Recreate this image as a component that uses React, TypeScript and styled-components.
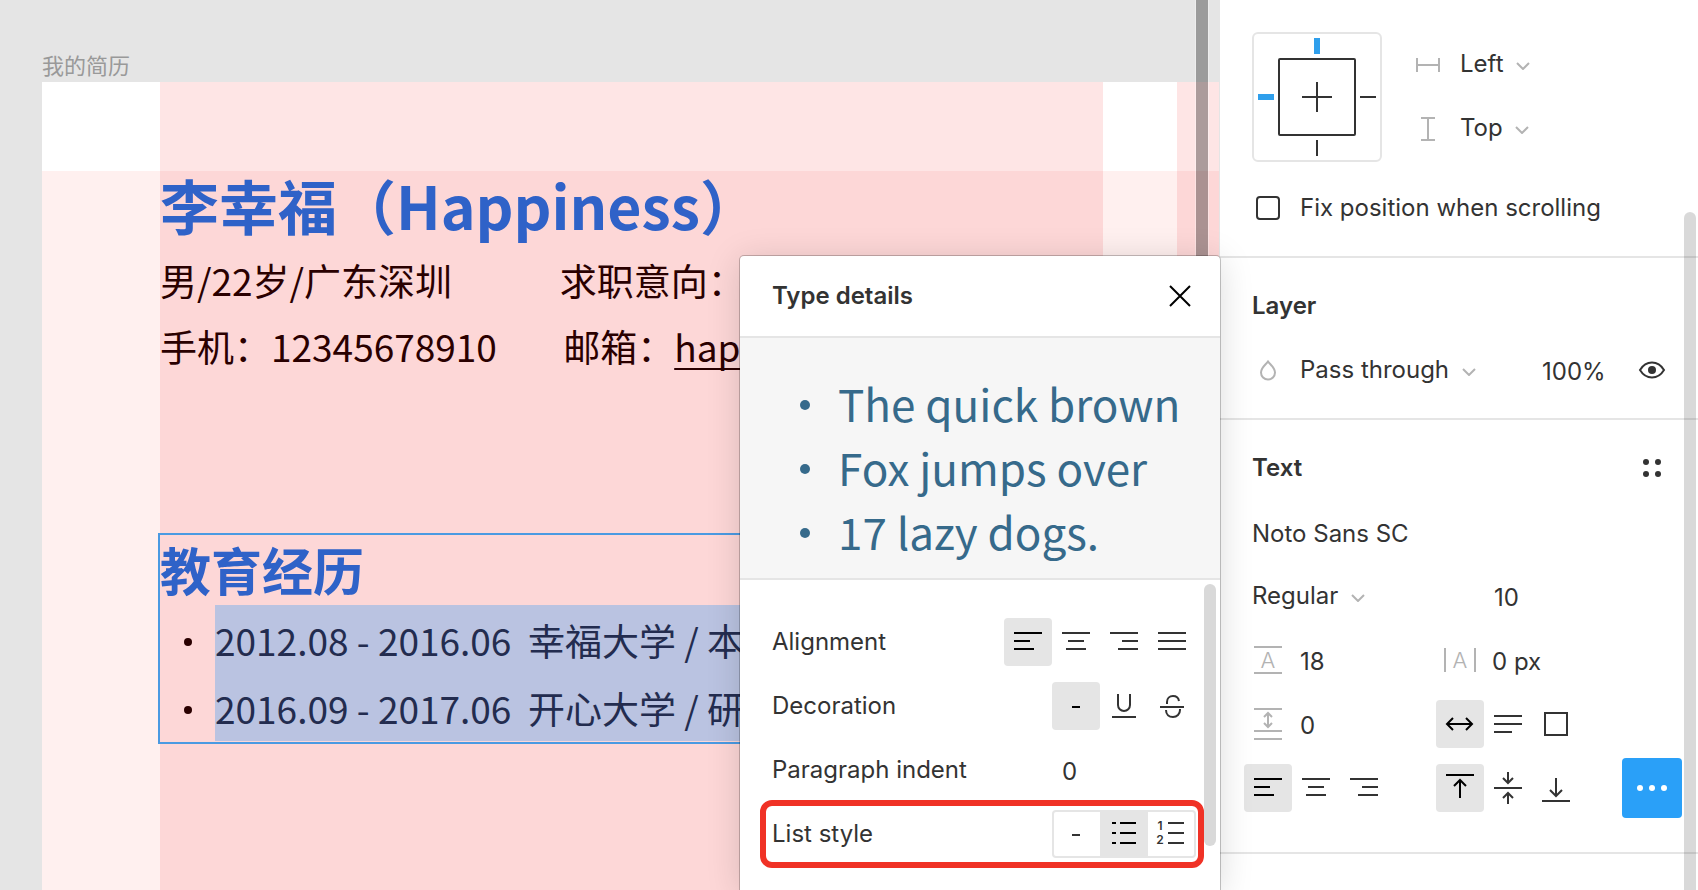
import React from "react";
import styled, { createGlobalStyle, css } from "styled-components";

const UI_FONT = `Inter, "Liberation Sans", sans-serif`;
const DOC_FONT = `"Noto Sans CJK SC", "Noto Sans", sans-serif`;

const GlobalStyle = createGlobalStyle`
  *, *::before, *::after { box-sizing: border-box; }
  body {
    margin: 0;
    background: #fff;
    color: #333;
    font-family: ${UI_FONT};
    font-size: 24px;
    line-height: 32px;
  }
  button, input, select {
    margin: 0;
    padding: 0;
    border: 0;
    background: none;
    color: inherit;
    font: inherit;
    outline: none;
  }
  svg { display: block; flex: none; }
`;

const Editor = styled.div`
  display: flex;
  height: 100vh;
  min-height: 860px;
  overflow: hidden;
`;

/* ---------- canvas ---------- */

const Canvas = styled.main`
  position: relative;
  z-index: 1;
  flex: 1;
  min-width: 0;
  display: flex;
  flex-direction: column;
  padding: 50px 0 0 42px;
  background: #e5e5e5;
  border-right: 1px solid #e5e5e5;
`;

const FrameLabel = styled.div`
  height: 32px;
  font-family: ${DOC_FONT};
  font-size: 22px;
  line-height: 28px;
  color: #999;
`;

const Artboard = styled.div`
  flex: 1;
  min-height: 0;
  display: grid;
  grid-template-columns: 118px minmax(0, 1fr) 74px 42px;
`;

const Strip = styled.div<{ $column?: boolean }>`
  min-width: 0;
  background: ${(p) =>
    p.$column
      ? "linear-gradient(#fee5e5 89px, #fdd7d7 89px)"
      : "linear-gradient(#fff 89px, #fff0ef 89px)"};
`;

const Resume = styled.article`
  padding-top: 81px;
  font-family: ${DOC_FONT};
  font-size: 37px;
  line-height: 66px;
  color: #2a0000;
  white-space: pre;
`;

const Name = styled.h1`
  margin: 0;
  font-size: 59px;
  line-height: 84px;
  font-weight: 700;
  color: #2f62c8;
`;

const InfoLine = styled.p`
  margin: 0;
`;

const MailLink = styled.a`
  color: inherit;
  text-decoration: underline;
  text-decoration-thickness: 2px;
  text-underline-offset: 6px;
  text-decoration-skip-ink: none;
`;

const SelectedBlock = styled.section`
  margin: 154px 0 0 -2px;
  padding-bottom: 1px;
  border: 2px solid #4a9ae2;
`;

const SectionTitle = styled.h2`
  margin: 0 0 2px;
  font-size: 51px;
  line-height: 68px;
  font-weight: 700;
  color: #2f62c8;
`;

const EntryList = styled.ul`
  margin: 0;
  padding: 0;
  list-style: none;
`;

const Entry = styled.li`
  display: grid;
  grid-template-columns: 55px minmax(0, 1fr);
  align-items: center;

  &::before {
    content: "";
    justify-self: center;
    width: 8px;
    height: 8px;
    margin-top: 6px;
    border-radius: 50%;
    background: #2a0000;
  }
`;

const Selection = styled.span`
  padding-top: 2px;
  background: #bac3e1;
  color: #232c4f;
`;

const CanvasScrollbar = styled.div`
  position: absolute;
  top: 0;
  bottom: 0;
  right: 10px;
  width: 14px;
  background: rgba(0, 0, 0, 0.32);
  border: solid rgba(255, 255, 255, 0.3);
  border-width: 0 1px;
  background-clip: padding-box;
`;

/* ---------- shared controls ---------- */

const IconButton = styled.button<{ $active?: boolean }>`
  width: 48px;
  height: 48px;
  border-radius: 4px;
  cursor: pointer;
  ${(p) =>
    p.$active &&
    css`
      background: #e5e5e5;
      color: #000;
    `}
`;

const ButtonGroup = styled.div<{ $outlined?: boolean }>`
  display: flex;
  border-radius: 4px;
  ${(p) =>
    p.$outlined &&
    css`
      box-shadow: inset 0 0 0 2px #e5e5e5;
      ${IconButton} {
        border-radius: 0;
      }
    `}
`;

const Field = styled.input<{ $width: number }>`
  width: ${(p) => p.$width}px;
  height: 48px;
  padding-top: 2px;
`;

const SelectWrap = styled.div`
  display: flex;
  align-items: center;
  gap: 12px;
`;

const Picker = styled.select`
  appearance: none;
  height: 32px;
  padding-bottom: 2px;
`;

const ChevronIcon = styled.svg`
  margin-top: 4px;
  fill: none;
  stroke: #b3b3b3;
  stroke-width: 2px;
`;

const Glyph = styled.svg<{ $muted?: boolean }>`
  width: 48px;
  height: 48px;
  fill: none;
  stroke: ${(p) => (p.$muted ? "#b3b3b3" : "currentColor")};
  stroke-width: 2px;

  text {
    fill: ${(p) => (p.$muted ? "#b3b3b3" : "currentColor")};
    stroke: none;
    text-anchor: middle;
  }
`;

function Icon({ d, muted, children }: { d?: string; muted?: boolean; children?: React.ReactNode }) {
  return (
    <Glyph viewBox="0 0 48 48" $muted={muted} aria-hidden="true">
      {d && <path d={d} />}
      {children}
    </Glyph>
  );
}

function Dropdown({ label, value }: { label: string; value: string }) {
  return (
    <SelectWrap>
      <Picker aria-label={label} defaultValue={value}>
        <option>{value}</option>
      </Picker>
      <ChevronIcon width="14" height="8" viewBox="0 0 14 8" aria-hidden="true">
        <path d="M1 1l6 6 6-6" />
      </ChevronIcon>
    </SelectWrap>
  );
}

const ICONS = {
  alignLeft: "M10 15H38M10 23H26M10 31H30",
  alignCenter: "M10 15H38M16 23H32M14 31H34",
  alignRight: "M10 15H38M22 23H38M18 31H38",
  alignJustify: "M10 15H38M10 23H38M10 31H38",
  none: "M20 25H28",
  underline: "M18 12V23a6 6 0 0 0 12 0V12M12 35H36",
  strike: "M12 25H36M19 22V20c0-3.500 2.500-6 6-6s5.500 2 6 5M18 28c0 4.500 3 7 7 7s7-3 7-7V27",
  bullets: "M12 13H16M12 23H16M12 33H16M20 13H36M20 23H36M20 33H36",
  numberedLines: "M20 13H36M20 23H36M20 33H36",
  autoWidth: "M11 24H36M17 18L11 24L17 30M30 18L36 24L30 30",
  autoHeight: "M10 16H38M10 24H38M10 32H28",
  fixedSize: "M13 13H35V35H13Z",
  alignTop: "M10 11H38M24 34V16M18 22L24 16L30 22",
  alignMiddle: "M10 24H38M24 8V18M19 14L24 19L29 14M24 40V30M19 34L24 29L29 34",
  alignBottom: "M10 37H38M24 14V32M18 26L24 32L30 26",
  horizontal: "M13 18V32M35 18V32M13 25H35",
  vertical: "M17 14H31M17 36H31M24 14V36",
  lineHeight: "M10 11H38M10 37H38",
  letterSpacing: "M9 12V36M39 12V36",
  paragraphSpacing: "M10 9H38M10 31H38M10 39H38M24 13V27M20 17L24 13L28 17M20 23L24 27L28 23",
  drop: "M24 15.500C22 18.500 17 21.500 17 26.500a7 7 0 0 0 14 0C31 21.500 26 18.500 24 15.500Z",
};

/* ---------- type details dialog ---------- */

const Dialog = styled.section`
  position: absolute;
  top: 256px;
  right: -1px;
  bottom: 0;
  width: 480px;
  background: #fff;
  border-radius: 4px 4px 0 0;
  box-shadow: 0 0 0 1px rgba(0, 0, 0, 0.22), 0 4px 34px rgba(0, 0, 0, 0.15);
`;

const DialogHeader = styled.header`
  display: flex;
  align-items: center;
  justify-content: space-between;
  height: 82px;
  padding: 0 16px 0 32px;
  border-bottom: 2px solid #e5e5e5;
  color: #333;
`;

const Heading = styled.h3`
  margin: 0;
  font-size: 24px;
  font-weight: 600;
`;

const Preview = styled.ul`
  margin: 0;
  padding: 33px 0 15px 48px;
  list-style: none;
  background: #f6f6f6;
  border-bottom: 2px solid #e5e5e5;
  font-family: ${DOC_FONT};
  font-size: 44px;
  line-height: 64px;
  color: #366a8b;
  white-space: nowrap;
`;

const PreviewLine = styled.li`
  display: grid;
  grid-template-columns: 34px 1fr;
  column-gap: 16px;
  align-items: center;

  &::before {
    content: "";
    justify-self: center;
    width: 10px;
    height: 10px;
    margin-top: 4px;
    border-radius: 50%;
    background: currentColor;
  }
`;

const DialogBody = styled.div`
  padding: 30px 24px 0 32px;
`;

const OptionRow = styled.div`
  position: relative;
  display: flex;
  align-items: center;
  justify-content: space-between;
  height: 64px;
`;

const Highlight = styled.div`
  position: absolute;
  inset: -2px -8px -2px -12px;
  border: 6px solid #f03226;
  border-radius: 12px;
  pointer-events: none;
`;

const DialogScrollbar = styled.div`
  position: absolute;
  top: 328px;
  right: 4px;
  width: 12px;
  height: 262px;
  border-radius: 6px;
  background: #d9d9d9;
`;

function TypeDetails() {
  return (
    <Dialog role="dialog" aria-labelledby="type-details">
      <DialogHeader>
        <Heading id="type-details">Type details</Heading>
        <IconButton aria-label="Close">
          <Icon>
            <path d="M14 14L34 34M34 14L14 34" stroke="#000" />
          </Icon>
        </IconButton>
      </DialogHeader>
      <Preview>
        <PreviewLine>The quick brown</PreviewLine>
        <PreviewLine>Fox jumps over</PreviewLine>
        <PreviewLine>17 lazy dogs.</PreviewLine>
      </Preview>
      <DialogBody>
        <OptionRow>
          <span>Alignment</span>
          <ButtonGroup>
            <IconButton $active aria-label="Left"><Icon d={ICONS.alignLeft} /></IconButton>
            <IconButton aria-label="Center"><Icon d={ICONS.alignCenter} /></IconButton>
            <IconButton aria-label="Right"><Icon d={ICONS.alignRight} /></IconButton>
            <IconButton aria-label="Justified"><Icon d={ICONS.alignJustify} /></IconButton>
          </ButtonGroup>
        </OptionRow>
        <OptionRow>
          <span>Decoration</span>
          <ButtonGroup>
            <IconButton $active aria-label="None"><Icon d={ICONS.none} /></IconButton>
            <IconButton aria-label="Underline"><Icon d={ICONS.underline} /></IconButton>
            <IconButton aria-label="Strikethrough"><Icon d={ICONS.strike} /></IconButton>
          </ButtonGroup>
        </OptionRow>
        <OptionRow>
          <label htmlFor="indent">Paragraph indent</label>
          <Field id="indent" $width={134} defaultValue="0" />
        </OptionRow>
        <OptionRow>
          <span>List style</span>
          <ButtonGroup $outlined>
            <IconButton aria-label="No list"><Icon d={ICONS.none} /></IconButton>
            <IconButton $active aria-label="Bulleted list"><Icon d={ICONS.bullets} /></IconButton>
            <IconButton aria-label="Numbered list">
              <Icon d={ICONS.numberedLines}>
                <text x="12" y="20" fontSize="12" fontWeight="600">1</text>
                <text x="12" y="34" fontSize="12" fontWeight="600">2</text>
              </Icon>
            </IconButton>
          </ButtonGroup>
          <Highlight />
        </OptionRow>
      </DialogBody>
      <DialogScrollbar />
    </Dialog>
  );
}

/* ---------- properties sidebar ---------- */

const Sidebar = styled.aside`
  position: relative;
  flex: none;
  width: 478px;
  background: #fff;
`;

const Panel = styled.section<{ $top?: number; $bottom?: number }>`
  padding: ${(p) => p.$top ?? 16}px 16px ${(p) => p.$bottom ?? 16}px 24px;
  border-bottom: 2px solid #e5e5e5;
`;

const Row = styled.div`
  display: flex;
  align-items: center;
  height: 64px;
`;

const Inset = styled.div`
  flex: 1;
  padding-left: 8px;
`;

const Half = styled.div`
  display: flex;
  align-items: center;
  gap: 8px;
  width: 192px;
`;

const Grow = styled.div<{ $indent?: number }>`
  display: flex;
  align-items: center;
  gap: 8px;
  flex: 1;
  padding-left: ${(p) => p.$indent ?? 0}px;
`;

const Trailing = styled.button`
  display: flex;
  align-items: center;
  justify-content: center;
  width: 60px;
  height: 48px;
  cursor: pointer;
`;

const MoreButton = styled(Trailing)`
  height: 60px;
  border-radius: 4px;
  background: #2aa0f8;
  color: #fff;
`;

const Constraints = styled.div`
  display: flex;
  gap: 22px;
  margin-bottom: 14px;
  padding-left: 8px;
`;

const ConstraintBox = styled.div`
  width: 130px;
  height: 130px;
  border: 2px solid #e5e5e5;
  border-radius: 6px;
`;

const CheckLabel = styled.label`
  display: flex;
  align-items: center;
  gap: 20px;
  padding-left: 12px;
`;

const Checkbox = styled.input`
  appearance: none;
  width: 24px;
  height: 24px;
  border: 2px solid #333;
  border-radius: 4px;
`;

const SidebarScrollbar = styled.div`
  position: absolute;
  top: 212px;
  right: 2px;
  bottom: 0;
  width: 12px;
  border-radius: 6px 6px 0 0;
  background: rgba(0, 0, 0, 0.15);
`;

function Properties() {
  return (
    <Sidebar>
      <Panel $top={32}>
        <Constraints>
          <ConstraintBox>
            <svg width="126" height="126" viewBox="0 0 126 126" fill="none" stroke="#333" strokeWidth="2" aria-hidden="true">
              <rect x="25" y="25" width="76" height="76" rx="1" />
              <path d="M48 63H78M63 48V78M106 63H122M63 106V122" />
              <path d="M63 4V20M4 63H20" stroke="#2f9fec" strokeWidth="6" />
            </svg>
          </ConstraintBox>
          <div>
            <Row>
              <Half>
                <Icon muted d={ICONS.horizontal} />
                <Dropdown label="Horizontal constraint" value="Left" />
              </Half>
            </Row>
            <Row>
              <Half>
                <Icon muted d={ICONS.vertical} />
                <Dropdown label="Vertical constraint" value="Top" />
              </Half>
            </Row>
          </div>
        </Constraints>
        <Row>
          <CheckLabel>
            <Checkbox type="checkbox" />
            <span>Fix position when scrolling</span>
          </CheckLabel>
        </Row>
      </Panel>

      <Panel>
        <Row>
          <Inset><Heading>Layer</Heading></Inset>
        </Row>
        <Row>
          <Grow>
            <Icon muted d={ICONS.drop} />
            <Dropdown label="Blend mode" value="Pass through" />
          </Grow>
          <Field aria-label="Opacity" $width={80} defaultValue="100%" />
          <Trailing aria-label="Toggle visibility">
            <Icon>
              <path d="M12 24C18 14 30 14 36 24C30 34 18 34 12 24Z" />
              <circle cx="24" cy="24" r="4" fill="currentColor" stroke="none" />
            </Icon>
          </Trailing>
        </Row>
      </Panel>

      <Panel $bottom={32}>
        <Row>
          <Inset><Heading>Text</Heading></Inset>
          <Trailing aria-label="Text styles">
            <Icon>
              <g fill="currentColor" stroke="none">
                <circle cx="18" cy="18" r="3" />
                <circle cx="30" cy="18" r="3" />
                <circle cx="18" cy="30" r="3" />
                <circle cx="30" cy="30" r="3" />
              </g>
            </Icon>
          </Trailing>
        </Row>
        <Row>
          <Inset><Field aria-label="Font family" $width={300} defaultValue="Noto Sans SC" /></Inset>
        </Row>
        <Row>
          <Half>
            <Inset><Dropdown label="Font style" value="Regular" /></Inset>
          </Half>
          <Grow $indent={58}>
            <Field aria-label="Font size" $width={100} defaultValue="10" />
          </Grow>
        </Row>
        <Row>
          <Half>
            <Icon muted d={ICONS.lineHeight}>
              <text x="24" y="32" fontSize="22" fontWeight="300">A</text>
            </Icon>
            <Field aria-label="Line height" $width={100} defaultValue="18" />
          </Half>
          <Grow>
            <Icon muted d={ICONS.letterSpacing}>
              <text x="24" y="32" fontSize="22" fontWeight="300">A</text>
            </Icon>
            <Field aria-label="Letter spacing" $width={100} defaultValue="0 px" />
          </Grow>
        </Row>
        <Row>
          <Half>
            <Icon muted d={ICONS.paragraphSpacing} />
            <Field aria-label="Paragraph spacing" $width={100} defaultValue="0" />
          </Half>
          <ButtonGroup>
            <IconButton $active aria-label="Auto width"><Icon d={ICONS.autoWidth} /></IconButton>
            <IconButton aria-label="Auto height"><Icon d={ICONS.autoHeight} /></IconButton>
            <IconButton aria-label="Fixed size"><Icon d={ICONS.fixedSize} /></IconButton>
          </ButtonGroup>
        </Row>
        <Row>
          <Half>
            <ButtonGroup>
              <IconButton $active aria-label="Align left"><Icon d={ICONS.alignLeft} /></IconButton>
              <IconButton aria-label="Align center"><Icon d={ICONS.alignCenter} /></IconButton>
              <IconButton aria-label="Align right"><Icon d={ICONS.alignRight} /></IconButton>
            </ButtonGroup>
          </Half>
          <Grow>
            <ButtonGroup>
              <IconButton $active aria-label="Align top"><Icon d={ICONS.alignTop} /></IconButton>
              <IconButton aria-label="Align middle"><Icon d={ICONS.alignMiddle} /></IconButton>
              <IconButton aria-label="Align bottom"><Icon d={ICONS.alignBottom} /></IconButton>
            </ButtonGroup>
          </Grow>
          <MoreButton aria-label="Type details">
            <Icon>
              <g fill="currentColor" stroke="none">
                <circle cx="12" cy="24" r="3" />
                <circle cx="24" cy="24" r="3" />
                <circle cx="36" cy="24" r="3" />
              </g>
            </Icon>
          </MoreButton>
        </Row>
      </Panel>
      <SidebarScrollbar />
    </Sidebar>
  );
}

export default function App() {
  return (
    <>
      <GlobalStyle />
      <Editor>
        <Canvas>
          <FrameLabel>我的简历</FrameLabel>
          <Artboard>
            <Strip />
            <Strip $column>
              <Resume lang="zh-CN">
                <Name>李幸福（Happiness）</Name>
                <InfoLine>{"男/22岁/广东深圳" + " ".repeat(13) + "求职意向："}</InfoLine>
                <InfoLine>
                  {"手机：12345678910" + " ".repeat(8) + "邮箱："}
                  <MailLink href="#mail">happ</MailLink>
                </InfoLine>
                <SelectedBlock>
                  <SectionTitle>教育经历</SectionTitle>
                  <EntryList>
                    <Entry><Selection>{"2012.08 - 2016.06  幸福大学 / 本"}</Selection></Entry>
                    <Entry><Selection>{"2016.09 - 2017.06  开心大学 / 研"}</Selection></Entry>
                  </EntryList>
                </SelectedBlock>
              </Resume>
            </Strip>
            <Strip />
            <Strip $column />
          </Artboard>
          <CanvasScrollbar />
          <TypeDetails />
        </Canvas>
        <Properties />
      </Editor>
    </>
  );
}
